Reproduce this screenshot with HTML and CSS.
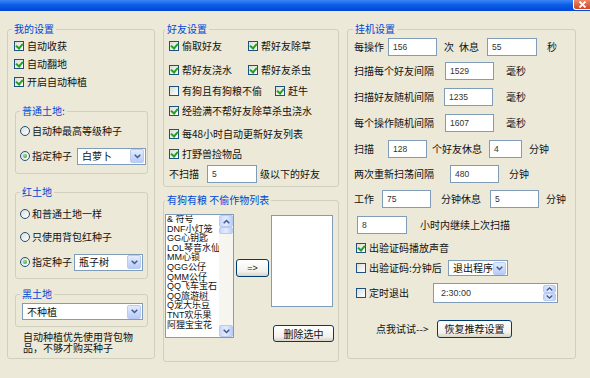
FILE: index.html
```html
<!DOCTYPE html>
<html lang="zh-CN">
<head>
<meta charset="utf-8">
<title>设置</title>
<link rel="stylesheet" href="styles.css">
</head>
<body>
<div class="titlebar">
  <span class="close"><svg width="9" height="7" viewBox="0 0 9 7"><path d="M1.5 0.5L7.5 6.5M7.5 0.5L1.5 6.5" stroke="#fff" stroke-width="1.8" fill="none"/></svg></span>
</div>
<div class="main">
  <fieldset class="grp g-left">
    <legend class="lg-l">我的设置</legend>
    <div class="row mt1"><span class="cb on"></span>自动收获</div>
    <div class="row"><span class="cb on"></span>自动翻地</div>
    <div class="row"><span class="cb on"></span>开启自动种植</div>
    <fieldset class="grp sub g-pt">
      <legend>普通土地:</legend>
      <div class="row h20 mt3"><span class="rb"></span>自动种最高等级种子</div>
      <div class="row h20 mt5"><span class="rb on"></span><span class="lbl4">指定种子</span>
        <div class="sel s-bai"><span class="seltxt">白萝卜</span><span class="dd"><svg width="7" height="5" viewBox="0 0 7 5"><path d="M0.7 0.7L3.5 3.5L6.3 0.7" fill="none" stroke="#3d5a94" stroke-width="1.5"/></svg></span></div>
      </div>
    </fieldset>
    <fieldset class="grp sub g-red">
      <legend>红土地</legend>
      <div class="row h20 mt5"><span class="rb"></span>和普通土地一样</div>
      <div class="row h20 mt3"><span class="rb"></span>只使用背包红种子</div>
      <div class="row h20 mt5"><span class="rb on"></span><span class="lbl4">指定种子</span>
        <div class="sel s-ping"><span class="seltxt">瓶子树</span><span class="dd"><svg width="7" height="5" viewBox="0 0 7 5"><path d="M0.7 0.7L3.5 3.5L6.3 0.7" fill="none" stroke="#3d5a94" stroke-width="1.5"/></svg></span></div>
      </div>
    </fieldset>
    <fieldset class="grp sub g-black">
      <legend>黑土地</legend>
      <div class="sel s-bu"><span class="seltxt">不种植</span><span class="dd"><svg width="7" height="5" viewBox="0 0 7 5"><path d="M0.7 0.7L3.5 3.5L6.3 0.7" fill="none" stroke="#3d5a94" stroke-width="1.5"/></svg></span></div>
    </fieldset>
    <p class="note">自动种植优先使用背包物品，不够才购买种子</p>
  </fieldset>

  <div class="col-mid">
    <fieldset class="grp g-mtop">
      <legend class="lg-m">好友设置</legend>
      <div class="row mt1"><span class="item w79"><span class="cb on"></span>偷取好友</span><span class="cb on"></span>帮好友除草</div>
      <div class="row mt6"><span class="item w79"><span class="cb on"></span>帮好友浇水</span><span class="cb on"></span>帮好友杀虫</div>
      <div class="row mt3"><span class="item w106"><span class="cb"></span>有狗且有狗粮不偷</span><span class="cb on"></span>赶牛</div>
      <div class="row mt2"><span class="cb on"></span>经验满不帮好友除草杀虫浇水</div>
      <div class="row mt5"><span class="cb on"></span>每48小时自动更新好友列表</div>
      <div class="row mt2"><span class="cb on"></span>打野兽捡物品</div>
      <div class="row h20 mt1"><span class="w38">不扫描</span><span class="inp w50 h20">5</span><span class="ml3">级以下的好友</span></div>
    </fieldset>
    <fieldset class="grp g-mbot">
      <legend>有狗有粮 不偷作物列表</legend>
      <div class="listrow">
        <div class="list">
          <div class="items">
            <div>&amp; 符号</div>
            <div>DNF小灯笼</div>
            <div>GG心钥匙</div>
            <div>LOL琴音水仙</div>
            <div>MM心锁</div>
            <div>QGG公仔</div>
            <div>QMM公仔</div>
            <div>QQ飞车宝石</div>
            <div>QQ旅游树</div>
            <div>Q宠大乐豆</div>
            <div>TNT欢乐果</div>
            <div>阿狸宝宝花</div>
          </div>
          <div class="sb">
            <span class="sbtn"><svg width="7" height="5" viewBox="0 0 7 5"><path d="M0.7 4.3L3.5 1.5L6.3 4.3" fill="none" stroke="#3d5a94" stroke-width="1.5"/></svg></span>
            <span class="thumb"></span>
            <span class="track"></span>
            <span class="sbtn"><svg width="7" height="5" viewBox="0 0 7 5"><path d="M0.7 0.7L3.5 3.5L6.3 0.7" fill="none" stroke="#3d5a94" stroke-width="1.5"/></svg></span>
          </div>
        </div>
        <div class="btn b-arrow">=&gt;</div>
        <div class="rcol">
          <div class="box"></div>
          <div class="btn b-del">删除选中</div>
        </div>
      </div>
    </fieldset>
  </div>

  <fieldset class="grp g-right">
    <legend class="lg-r">挂机设置</legend>
    <div class="row mt2"><span class="w34">每操作</span><span class="inp w49">156</span><span class="ml7">次</span><span class="ml5">休息</span><span class="inp w50 ml8">55</span><span class="ml10">秒</span></div>
    <div class="row mt6"><span class="w91">扫描每个好友间隔</span><span class="inp w49">1529</span><span class="ml12">毫秒</span></div>
    <div class="row mt8"><span class="w90">扫描好友随机间隔</span><span class="inp w49">1235</span><span class="ml13">毫秒</span></div>
    <div class="row mt8"><span class="w91">每个操作随机间隔</span><span class="inp w49">1607</span><span class="ml12">毫秒</span></div>
    <div class="row h19 mt7"><span class="w34">扫描</span><span class="inp w39 h19">128</span><span class="ml5">个好友休息</span><span class="inp w33 h19 ml7">4</span><span class="ml7">分钟</span></div>
    <div class="row h19 mt6"><span class="w96">两次重新扫荡间隔</span><span class="inp w49 h19">480</span><span class="ml10">分钟</span></div>
    <div class="row mt7"><span class="w28">工作</span><span class="inp w49">75</span><span class="ml10">分钟休息</span><span class="inp w49 ml9">5</span><span class="ml7">分钟</span></div>
    <div class="row h19 mt7"><span class="inp w50 h19 ml3">8</span><span class="ml13">小时内继续上次扫描</span></div>
    <div class="row h14 mt7"><span class="cb on ml2"></span>出验证码播放声音</div>
    <div class="row h16 mt5"><span class="cb ml2"></span><span class="w79">出验证码:分钟后</span>
      <div class="sel s-exit"><span class="seltxt">退出程序</span><span class="dd"><svg width="7" height="5" viewBox="0 0 7 5"><path d="M0.7 0.7L3.5 3.5L6.3 0.7" fill="none" stroke="#3d5a94" stroke-width="1.5"/></svg></span></div>
    </div>
    <div class="row h20 mt7"><span class="cb ml2"></span><span class="w64">定时退出</span>
      <div class="timebox"><span class="ttxt">2:30:00</span>
        <span class="spin">
          <span class="sp"><svg width="7" height="4" viewBox="0 0 7 4"><path d="M0.7 3.4L3.5 0.9L6.3 3.4" fill="none" stroke="#3d5a94" stroke-width="1.3"/></svg></span>
          <span class="sp"><svg width="7" height="4" viewBox="0 0 7 4"><path d="M0.7 0.6L3.5 3.1L6.3 0.6" fill="none" stroke="#3d5a94" stroke-width="1.3"/></svg></span>
        </span>
      </div>
    </div>
    <div class="row mt17"><span class="ml22 w61">点我试试--&gt;</span><div class="btn b-rec">恢复推荐设置</div></div>
  </fieldset>
</div>
</body>
</html>
```

FILE: styles.css
```css
* { box-sizing: border-box; }
html, body { margin: 0; padding: 0; }
body {
  width: 590px;
  height: 378px;
  overflow: hidden;
  background: #ece9d8;
  font-family: "Noto Sans CJK SC", "Noto Sans", sans-serif;
  font-size: 10px;
  line-height: 14px;
  color: #111;
}

.titlebar {
  height: 11px;
  background: linear-gradient(#3a86f4, #0b5de8 45%, #0047d6);
  display: flex;
  justify-content: flex-end;
}
.close {
  width: 17px;
  height: 10px;
  background: linear-gradient(#e9896a, #d4461e);
  border-left: 1px solid #fff;
  border-bottom: 1px solid #fff;
  border-radius: 0 0 0 3px;
  display: flex;
  align-items: center;
  justify-content: center;
}

.main {
  display: flex;
  align-items: flex-start;
  padding: 11px 0 0 7px;
}

fieldset.grp {
  margin: 0;
  border: 1px solid #d0d0bf;
  border-radius: 3px;
  min-width: 0;
}
legend {
  padding: 0 2px;
  margin-left: 0;
  color: #0046d5;
  font-size: 10px;
  line-height: 14px;
}
.lg-l { margin-left: -2px; }
.lg-m { margin-left: -4px; }
.lg-r { margin-left: -1px; }

.g-left { width: 148px; height: 337px; padding: 0 6px; }
.sub { margin-left: 1px !important; }
.g-pt { margin-top: 13px !important; padding: 0 1px 7px 4px; }
.g-red { margin-top: 11px !important; padding: 0 1px 6px 4px; }
.g-black { margin-top: 8px !important; padding: 2px 1px 6px 4px; }
.g-black .sel { margin-left: 2px; }

.note {
  margin: 5px 0 0 9px;
  width: 116px;
  line-height: 10.5px;
}

.col-mid { width: 176px; margin-left: 8px; display: flex; flex-direction: column; }
.g-mtop { height: 165px; padding: 0 5px; }
.g-mbot { height: 169px; margin-top: 6px !important; padding: 0 1px; }
.g-right { width: 229px; height: 337px; margin-left: 8px !important; padding: 0 6px; }

.row {
  display: flex;
  align-items: center;
  height: 18px;
  white-space: nowrap;
}
.item { display: flex; align-items: center; flex: none; }
.row > span, .row > div { flex: none; }

.h14 { height: 14px; }
.h16 { height: 16px; }
.h19 { height: 19px; }
.h20 { height: 20px; }
.mt1 { margin-top: 1px; }
.mt2 { margin-top: 2px; }
.mt3 { margin-top: 3px; }
.mt5 { margin-top: 5px; }
.mt6 { margin-top: 6px; }
.mt7 { margin-top: 7px; }
.mt8 { margin-top: 8px; }
.mt17 { margin-top: 17px; }
.ml2 { margin-left: 2px; }
.ml3 { margin-left: 3px; }
.ml5 { margin-left: 5px; }
.ml7 { margin-left: 7px; }
.ml8 { margin-left: 8px; }
.ml9 { margin-left: 9px; }
.ml10 { margin-left: 10px; }
.ml12 { margin-left: 12px; }
.ml13 { margin-left: 13px; }
.ml22 { margin-left: 22px; }
.w28 { width: 28px; }
.w33 { width: 33px; }
.w34 { width: 34px; }
.w38 { width: 38px; }
.w39 { width: 39px; }
.w49 { width: 49px; }
.w50 { width: 50px; }
.w61 { width: 61px; }
.w64 { width: 64px; }
.w79 { width: 79px; }
.w90 { width: 90px; }
.w91 { width: 91px; }
.w96 { width: 96px; }
.w106 { width: 106px; }

/* checkbox */
.cb {
  width: 10px;
  height: 10px;
  border: 1px solid #1c5180;
  background: linear-gradient(135deg, #dcdcd5, #fff);
  margin-right: 3px;
  position: relative;
  flex: none;
}
.cb.on::after {
  content: "";
  position: absolute;
  left: 2px;
  top: 0px;
  width: 3px;
  height: 5px;
  border: solid #21a121;
  border-width: 0 2px 2px 0;
  transform: rotate(40deg);
}

/* radio */
.rb {
  width: 10px;
  height: 10px;
  border-radius: 50%;
  border: 1px solid #1c5180;
  background: linear-gradient(135deg, #dcdcd5, #fff);
  margin-right: 2px;
  position: relative;
  flex: none;
}
.rb.on::after {
  content: "";
  position: absolute;
  left: 2px;
  top: 2px;
  width: 4px;
  height: 4px;
  border-radius: 50%;
  background: radial-gradient(circle at 35% 35%, #8fe08f, #21a121);
}
.lbl4 { width: 45px; }
.g-red .lbl4 { width: 42px; }

/* select */
.sel {
  display: flex;
  align-items: center;
  height: 17px;
  border: 1px solid #7f9db9;
  background: #fff;
  padding: 0 1px 0 4px;
}
.seltxt { flex: 1; }
.dd {
  width: 14px;
  height: 14px;
  border: 1px solid #b9cbf3;
  border-radius: 2px;
  background: linear-gradient(#e4ecfd, #b8cbf7);
  display: flex;
  align-items: center;
  justify-content: center;
}
.s-bai { width: 69px; }
.s-ping { width: 69px; }
.s-bu { width: 121px; }
.s-exit { width: 60px; height: 16px; }
.s-exit .dd { height: 13px; width: 13px; }

/* text input */
.inp {
  height: 18px;
  border: 1px solid #7f9db9;
  background: #fff;
  font-family: "Liberation Sans", sans-serif;
  font-size: 8.5px;
  color: #333;
  padding-left: 4px;
  display: flex;
  align-items: center;
}

/* list */
.listrow { display: flex; align-items: flex-start; margin-top: 7px; }
.list {
  width: 69px;
  height: 124px;
  border: 1px solid #7f9db9;
  background: #fff;
  display: flex;
  flex: none;
}
.items {
  flex: 1;
  overflow: hidden;
  white-space: nowrap;
  font-family: "Liberation Sans", "Noto Sans CJK SC", sans-serif;
  font-size: 9px;
  line-height: 9.6px;
  padding-left: 1px;
  color: #111;
}
.sb {
  width: 14px;
  display: flex;
  flex-direction: column;
  background: #f6f5f0;
}
.sbtn {
  height: 12px;
  border: 1px solid #b9cbf3;
  border-radius: 2px;
  background: linear-gradient(90deg, #c9d7fb, #e4ecfd 50%, #bccdf6);
  display: flex;
  align-items: center;
  justify-content: center;
}
.thumb {
  height: 7px;
  border: 1px solid #b9cbf3;
  border-radius: 2px;
  background: linear-gradient(90deg, #c9d7fb, #e4ecfd 50%, #bccdf6);
}
.track { flex: 1; }

.btn {
  border: 1px solid #003c74;
  border-radius: 3px;
  background: linear-gradient(#ffffff, #f3f2ec 70%, #d8d3c6);
  display: flex;
  align-items: center;
  justify-content: center;
  flex: none;
  font-size: 10px;
  color: #111;
}
.b-arrow {
  width: 33px;
  height: 18px;
  margin: 45px 0 0 2px;
  font-family: "Liberation Sans", sans-serif;
  font-size: 9px;
}
.rcol { display: flex; flex-direction: column; margin-left: 2px; }
.box {
  width: 62px;
  height: 92px;
  margin-top: 1px;
  border: 1px solid #7f9db9;
  background: #fff;
}
.b-del { width: 61px; height: 17px; margin: 18px 0 0 2px; }
.b-rec { width: 75px; height: 18px; }

/* time picker */
.timebox {
  width: 125px;
  height: 20px;
  border: 1px solid #7f9db9;
  background: #fff;
  display: flex;
  align-items: center;
  padding: 0 1px 0 7px;
  font-family: "Liberation Sans", sans-serif;
  font-size: 9px;
  color: #333;
}
.ttxt { flex: 1; }
.spin {
  width: 13px;
  height: 16px;
  display: flex;
  flex-direction: column;
}
.sp {
  flex: 1;
  border: 1px solid #b9cbf3;
  border-radius: 2px;
  background: linear-gradient(90deg, #c9d7fb, #e4ecfd 50%, #bccdf6);
  display: flex;
  align-items: center;
  justify-content: center;
}
```
